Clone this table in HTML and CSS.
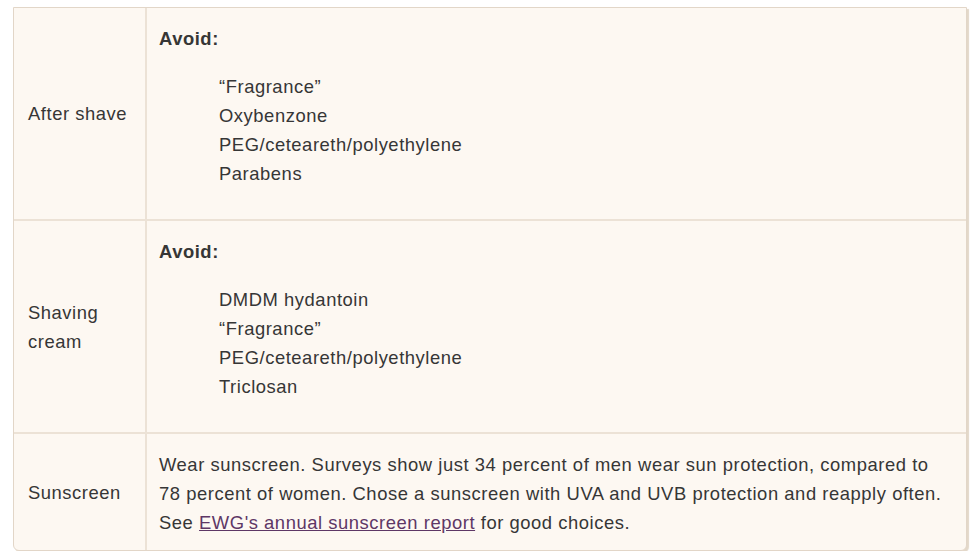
FILE: index.html
```html
<!DOCTYPE html>
<html>
<head>
<meta charset="utf-8">
<link rel="stylesheet" href="styles.css">
</head>
<body>
<div class="wrap">
<table class="guide">
  <tr>
    <td class="label">After shave</td>
    <td class="body">
      <p class="avoid">Avoid:</p>
      <ul class="items">
        <li>“Fragrance”</li>
        <li>Oxybenzone</li>
        <li>PEG/ceteareth/polyethylene</li>
        <li>Parabens</li>
      </ul>
    </td>
  </tr>
  <tr>
    <td class="label">Shaving cream</td>
    <td class="body">
      <p class="avoid">Avoid:</p>
      <ul class="items">
        <li>DMDM hydantoin</li>
        <li>“Fragrance”</li>
        <li>PEG/ceteareth/polyethylene</li>
        <li>Triclosan</li>
      </ul>
    </td>
  </tr>
  <tr>
    <td class="label">Sunscreen</td>
    <td class="body">Wear sunscreen. Surveys show just 34 percent of men wear sun protection, compared to 78 percent of women. Chose a sunscreen with UVA and UVB protection and reapply often. See <a href="#">EWG's annual sunscreen report</a> for good choices.</td>
  </tr>
</table>
</div>
</body>
</html>
```
FILE: styles.css
```css
html, body {
  margin: 0;
  padding: 0;
  background: #ffffff;
}
.wrap {
  padding: 7px 13px 0 13px;
  width: 954px;
}
.guide {
  width: 954px;
  border-collapse: separate;
  border-spacing: 0;
  background: #fdf8f2;
  border: 1px solid #e2d6c8;
  border-radius: 0 0 6px 6px;
  box-shadow: 2px 2px 1px #e3d8c9;
  font-family: "Liberation Sans", Arial, sans-serif;
  font-size: 18.4px;
  letter-spacing: 0.55px;
  line-height: 29px;
  color: #363636;
}
.guide td {
  border-bottom: 2px solid #ece2d6;
}
.guide tr:last-child td {
  border-bottom: none;
}
.label {
  width: 104px;
  padding: 0 13px 0 14px;
  vertical-align: middle;
  border-right: 2px solid #ece2d6;
}
.body {
  padding: 16px 20px 12px 12px;
  vertical-align: top;
}
.guide tr:last-child .body {
  padding: 16px 20px 13px 12px;
}
.avoid {
  margin: 0;
  font-weight: bold;
}
.items {
  list-style: none;
  margin: 19px 0 19px 0;
  padding: 0 0 0 60px;
}
.body a {
  color: #5e3766;
  text-decoration: underline;
}
```
